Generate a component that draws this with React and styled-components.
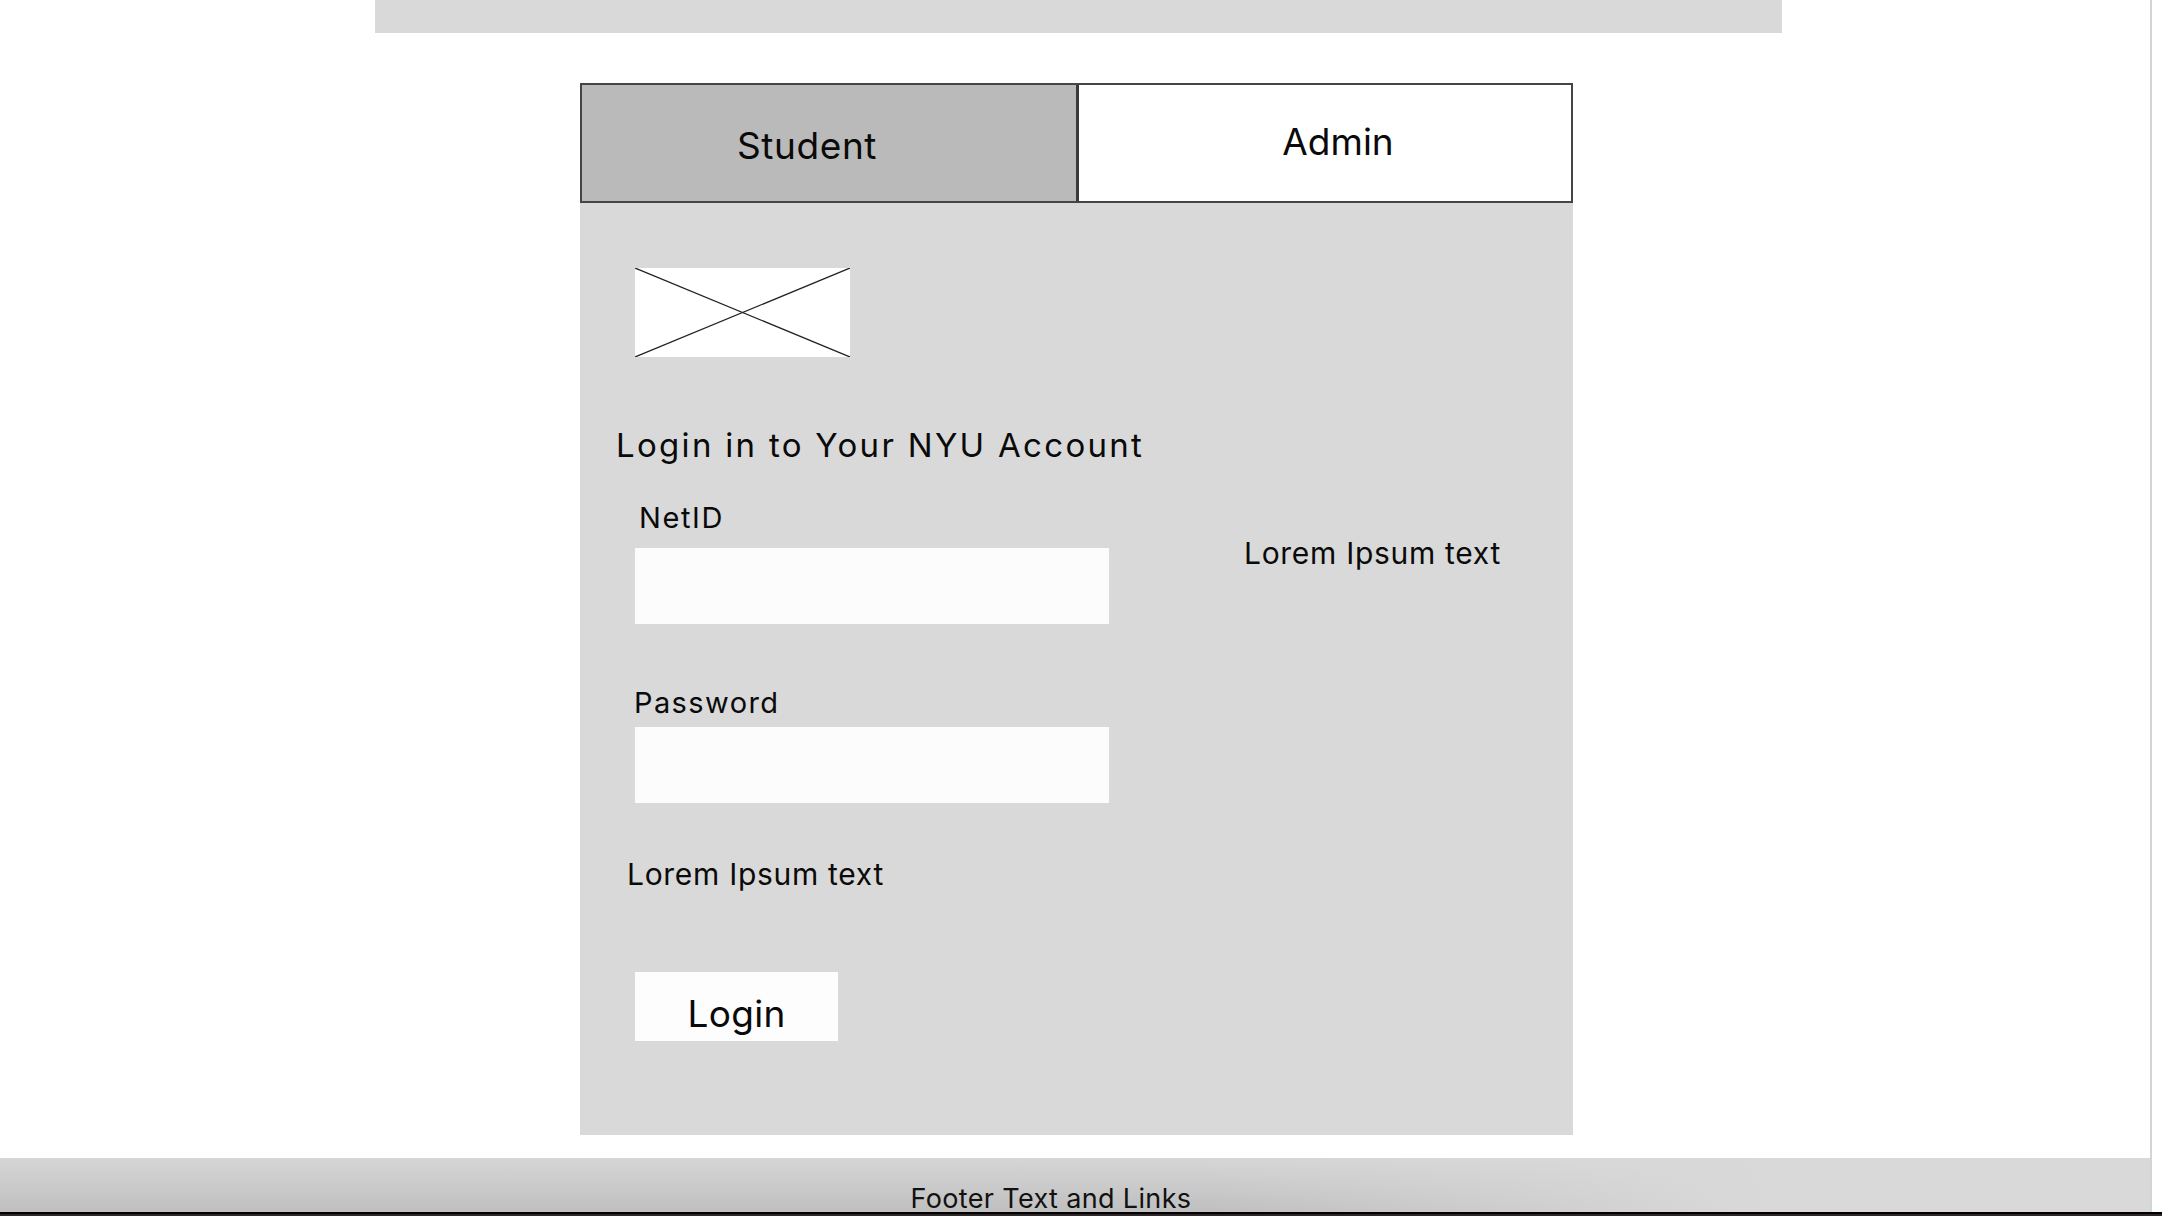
import React from "react";
import styled, { createGlobalStyle } from "styled-components";

const GlobalStyle = createGlobalStyle`
  html, body { margin: 0; padding: 0; background: #ffffff; }
  body { font-family: Inter, "Noto Sans", "Liberation Sans", sans-serif; color: #0a0a0a; }
  * { box-sizing: border-box; }
`;

const Shell = styled.div`
  width: 2162px;
  height: 1216px;
  display: flex;
  flex-direction: column;
  overflow: hidden;
`;

const Frame = styled.div`
  display: flex;
  height: 1212px;
  flex-shrink: 0;
`;

const Content = styled.div`
  width: 2150px;
  display: flex;
  flex-direction: column;
  background: #ffffff;
`;

const RightStrip = styled.div`
  flex: 1;
  border-left: 2px solid #d1d5d9;
  background: #ffffff;
`;

const BottomBar = styled.div`
  height: 4px;
  border-top: 2px solid #000000;
  background: #2e2629;
  flex-shrink: 0;
`;

const TopBar = styled.div`
  margin-left: 375px;
  width: 1407px;
  height: 33px;
  background: #d9d9d9;
  flex-shrink: 0;
`;

const Card = styled.div`
  margin: 50px 0 0 580px;
  width: 993px;
  display: flex;
  flex-direction: column;
`;

const Tabs = styled.div`
  display: flex;
  height: 120px;
  border: 2px solid #454545;
`;

const Tab = styled.div`
  flex: ${(p) => (p.$active ? "0 0 494px" : "1 1 0")};
  min-width: 0;
  display: flex;
  justify-content: center;
  align-items: flex-start;
  background: ${(p) => (p.$active ? "#bababa" : "#ffffff")};
  border-left: ${(p) => (p.$active ? "none" : "3px solid #3a3a3a")};
  padding-top: ${(p) => p.$top}px;
  padding-left: ${(p) => (p.$shift > 0 ? p.$shift * 2 : 0)}px;
  padding-right: ${(p) => (p.$shift < 0 ? -p.$shift * 2 : 0)}px;
  font-size: 37px;
  letter-spacing: ${(p) => p.$spacing || 0}px;
  line-height: 1;
`;

const Panel = styled.div`
  height: 932px;
  background: #d9d9d9;
  display: flex;
  padding: 65px 0 0 55px;
`;

const FormColumn = styled.div`
  width: 474px;
  flex-shrink: 0;
  display: flex;
  flex-direction: column;
  align-items: flex-start;
`;

const ImagePlaceholder = styled.div`
  width: 215px;
  height: 89px;
  background: #ffffff;
  flex-shrink: 0;

  svg {
    display: block;
    width: 100%;
    height: 100%;
  }
`;

const Text = styled.div`
  font-size: ${(p) => p.$size}px;
  letter-spacing: ${(p) => p.$spacing || 0}px;
  line-height: 1;
  margin-top: ${(p) => p.$top}px;
  margin-left: ${(p) => p.$left || 0}px;
  white-space: nowrap;
`;

const Field = styled.input`
  width: 474px;
  height: 76px;
  margin-top: ${(p) => p.$top}px;
  background: #fcfcfc;
  border: none;
  outline: none;
  padding: 0 16px;
  font-family: inherit;
  font-size: 26px;
  flex-shrink: 0;
`;

const LoginButton = styled.button`
  width: 203px;
  height: 69px;
  margin-top: 83px;
  background: #fdfdfd;
  border: none;
  display: flex;
  justify-content: center;
  align-items: flex-start;
  padding: 23px 0 0;
  font-family: inherit;
  font-size: 37px;
  letter-spacing: 0.3px;
  line-height: 1;
  color: #0a0a0a;
  cursor: pointer;
`;

const Aside = styled.div`
  margin: 270px 0 0 135px;
  font-size: 30px;
  letter-spacing: 0.7px;
  line-height: 1;
  white-space: nowrap;
`;

const Footer = styled.footer`
  margin-top: 23px;
  height: 54px;
  overflow: hidden;
  background:
    linear-gradient(to right, rgba(217, 217, 217, 0) 56%, #d9d9d9 82%),
    linear-gradient(to bottom, #d6d6d6, #bfbfbf);
  padding: 27px 48px 0 0;
  text-align: center;
  font-size: 27px;
  letter-spacing: 0.35px;
  line-height: 1;
  color: #111111;
`;

function Placeholder() {
  return (
    <ImagePlaceholder>
      <svg viewBox="0 0 215 89" preserveAspectRatio="none">
        <line x1="0" y1="0" x2="215" y2="89" stroke="#222222" strokeWidth="1.3" />
        <line x1="215" y1="0" x2="0" y2="89" stroke="#222222" strokeWidth="1.3" />
      </svg>
    </ImagePlaceholder>
  );
}

export default function App() {
  return (
    <>
      <GlobalStyle />
      <Shell>
        <Frame>
          <Content>
            <TopBar />
            <Card>
              <Tabs>
                <Tab $active $top={42} $shift={-22} $spacing={0.6}>Student</Tab>
                <Tab $top={38} $shift={13}>Admin</Tab>
              </Tabs>
              <Panel>
                <FormColumn>
                  <Placeholder />
                  <Text $size={33} $top={72} $left={-19} $spacing={2.3}>Login in to Your NYU Account</Text>
                  <Text $size={29} $top={41} $left={4} $spacing={1.6}>NetID</Text>
                  <Field $top={16} type="text" />
                  <Text $size={29} $top={64} $left={-1} $spacing={1.4}>Password</Text>
                  <Field $top={10} type="password" />
                  <Text $size={30} $top={56} $left={-8} $spacing={0.7}>Lorem Ipsum text</Text>
                  <LoginButton>Login</LoginButton>
                </FormColumn>
                <Aside>Lorem Ipsum text</Aside>
              </Panel>
            </Card>
            <Footer>Footer Text and Links</Footer>
          </Content>
          <RightStrip />
        </Frame>
        <BottomBar />
      </Shell>
    </>
  );
}
